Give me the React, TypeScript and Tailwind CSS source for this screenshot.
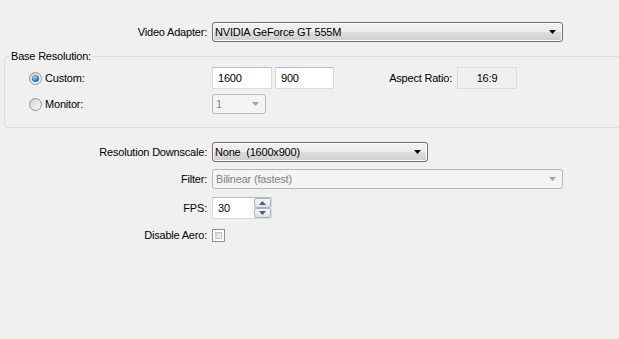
import React from 'react';

const Arrow = ({ disabled }: { disabled?: boolean }) => (
  <svg width="7" height="4" viewBox="0 0 7 4" className="shrink-0">
    <path d="M0 0h7L3.5 4z" fill={disabled ? '#a3a3a3' : '#000'} />
  </svg>
);

const Combo = ({
  value,
  width,
  disabled,
}: {
  value: string;
  width: string;
  disabled?: boolean;
}) =>
  disabled ? (
    <div
      className={`flex h-[20px] items-center justify-between rounded-[3px] border border-[#b5b8bc] bg-[#f4f4f4] pl-[3px] pr-[6px] text-[#838383] ${width}`}
    >
      <span>{value}</span>
      <Arrow disabled />
    </div>
  ) : (
    <div
      className={`flex h-[20px] items-center justify-between rounded-[3px] border border-[#707070] bg-[linear-gradient(to_bottom,#f2f2f2_0%,#ebebeb_50%,#dddddd_50%,#cfcfcf_100%)] pl-[2px] pr-[6px] shadow-[inset_0_0_0_1px_#fbfbfb] ${width}`}
    >
      <span>{value}</span>
      <Arrow />
    </div>
  );

const TextBox = ({ value, width }: { value: string; width: string }) => (
  <div
    className={`flex h-[22px] items-center border border-[#d9dde3] border-t-[#b9bdc3] bg-white pl-[5px] ${width}`}
  >
    {value}
  </div>
);

const Radio = ({ checked, label }: { checked?: boolean; label: string }) => (
  <div className="flex items-center gap-[3px]">
    <div className="flex h-[13px] w-[13px] items-center justify-center rounded-full border border-[#8f9396] bg-[linear-gradient(135deg,#d4d4d4,#f8f8f8)]">
      {checked && (
        <div className="h-[7px] w-[7px] rounded-full bg-[radial-gradient(circle_at_40%_35%,#a8e2ff_0%,#3a8ad0_45%,#13427c_100%)]" />
      )}
    </div>
    <span>{label}</span>
  </div>
);

const SpinButton = ({ up }: { up?: boolean }) => (
  <div className="flex h-[10px] w-[17px] items-center justify-center rounded-[2px] border border-[#a9b1bb] bg-[linear-gradient(to_bottom,#f4f6f8,#dfe4ea)]">
    <svg width="7" height="4" viewBox="0 0 7 4">
      <path d={up ? 'M0 4h7L3.5 0z' : 'M0 0h7L3.5 4z'} fill="#4a5f86" />
    </svg>
  </div>
);

const Label = ({ children }: { children: React.ReactNode }) => (
  <div className="pr-[1px] text-right">{children}</div>
);

export default function App() {
  return (
    <div className="h-[339px] w-[619px] overflow-hidden bg-[#f0f0f0] pt-[22px] font-['Liberation_Sans',Arial,sans-serif] text-[11px] leading-[13px] tracking-[-0.2px] text-black">
      <div className="grid grid-cols-[208px_auto] items-center gap-x-[4px]">
        <Label>Video Adapter:</Label>
        <Combo value="NVIDIA GeForce GT 555M" width="w-[351px]" />
      </div>

      <fieldset className="mt-[8px] ml-[4px] w-[640px] rounded-[3px] border border-[#d5dfe5] pt-[4px] pb-[13px]">
        <legend className="ml-[5px] px-px">Base Resolution:</legend>
        <div className="flex h-[22px] items-center">
          <div className="w-[207px] pl-[24px]">
            <Radio checked label="Custom:" />
          </div>
          <TextBox value="1600" width="w-[60px]" />
          <div className="w-[3px]" />
          <TextBox value="900" width="w-[59px]" />
          <div className="w-[118px] text-right">Aspect Ratio:</div>
          <div className="ml-[5px] flex h-[22px] w-[60px] items-center justify-center border border-[#dcdcdc] bg-[#f0f0f0]">
            16:9
          </div>
        </div>
        <div className="mt-[5px] flex h-[20px] items-center">
          <div className="w-[207px] pl-[24px]">
            <Radio label="Monitor:" />
          </div>
          <Combo value="1" width="w-[54px]" disabled />
        </div>
      </fieldset>

      <div className="mt-[14px] grid grid-cols-[208px_auto] items-center gap-x-[4px]">
        <Label>Resolution Downscale:</Label>
        <Combo value="None  (1600x900)" width="w-[216px] whitespace-pre" />

        <div className="col-span-2 h-[7px]" />
        <Label>Filter:</Label>
        <Combo value="Bilinear (fastest)" width="w-[351px]" disabled />

        <div className="col-span-2 h-[8px]" />
        <Label>FPS:</Label>
        <div className="flex h-[22px] w-[60px] items-center border border-[#d9dde3] border-t-[#b9bdc3] bg-white">
          <span className="flex-1 pl-[5px]">30</span>
          <div className="flex flex-col">
            <SpinButton up />
            <SpinButton />
          </div>
        </div>

        <div className="col-span-2 h-[10px]" />
        <Label>Disable Aero:</Label>
        <div className="h-[13px] w-[13px] border border-[#8e8f8f] bg-white p-[2px]">
          <div className="h-full w-full border border-[#c6c6c6] bg-[linear-gradient(135deg,#d0d0d0,#f6f6f6)]" />
        </div>
      </div>
    </div>
  );
}
